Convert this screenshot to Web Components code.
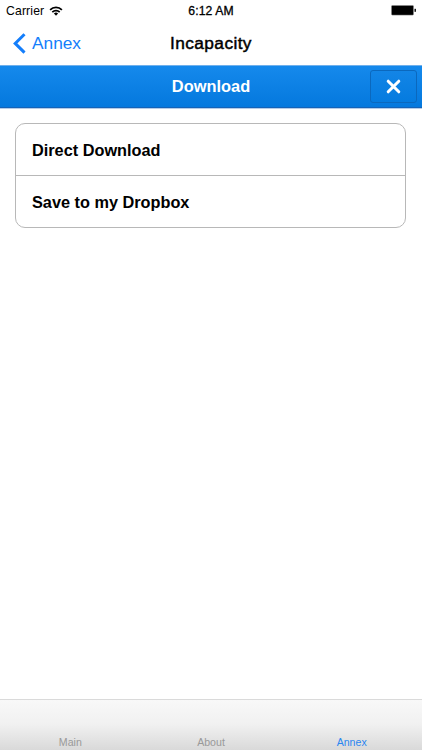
<!DOCTYPE html>
<html lang="en">
<head>
<meta charset="utf-8">
<meta name="viewport" content="width=device-width, initial-scale=1">
<title>Incapacity</title>
<style>
  html, body {
    margin: 0;
    height: 100%;
    overflow: hidden;
    background: #fff;
    font-family: "Liberation Sans", Arial, sans-serif;
  }
</style>
</head>
<body>
<phone-screen>
  <status-bar slot="top" carrier="Carrier" time="6:12 AM"></status-bar>
  <nav-bar slot="top" back="Annex">Incapacity</nav-bar>
  <dialog-header slot="top">Download</dialog-header>
  <option-list>
    <option-row>Direct Download</option-row>
    <option-row>Save to my Dropbox</option-row>
  </option-list>
  <tab-bar slot="bottom">
    <tab-item>Main</tab-item>
    <tab-item>About</tab-item>
    <tab-item active>Annex</tab-item>
  </tab-bar>
</phone-screen>

<script>
class PhoneScreen extends HTMLElement {
  constructor() {
    super();
    this.attachShadow({ mode: "open" });
  }
  connectedCallback() {
    this.shadowRoot.innerHTML = `
      <style>
        :host {
          display: flex;
          flex-direction: column;
          height: 100vh;
        }
        main {
          flex: 1;
          padding: 14px 16px 0 15px;
        }
      </style>
      <slot name="top"></slot>
      <main><slot></slot></main>
      <slot name="bottom"></slot>
    `;
  }
}
customElements.define("phone-screen", PhoneScreen);

class StatusBar extends HTMLElement {
  constructor() {
    super();
    this.attachShadow({ mode: "open" });
  }
  connectedCallback() {
    this.shadowRoot.innerHTML = `
      <style>
        :host {
          display: grid;
          grid-template-columns: 1fr auto 1fr;
          align-items: center;
          box-sizing: border-box;
          height: 22px;
          padding: 0 6px;
          font-size: 12.2px;
          line-height: 22px;
          color: #000;
        }
        .left {
          display: flex;
          align-items: center;
          letter-spacing: 0.15px;
        }
        .wifi {
          margin-left: 5px;
          margin-bottom: 1px;
        }
        .time {
          letter-spacing: 0.1px;
          -webkit-text-stroke: 0.3px #000;
        }
        .battery {
          justify-self: end;
          margin-bottom: 1px;
        }
        svg {
          display: block;
        }
      </style>
      <div class="left">
        <span>${this.getAttribute("carrier")}</span>
        <svg class="wifi" width="14" height="10" viewBox="0 0 14 10" fill="none" stroke="#000" stroke-width="1.7">
          <path d="M1.1 3.8a8.3 8.3 0 0 1 11.8 0"/>
          <path d="M3.3 6.1a5.2 5.2 0 0 1 7.4 0"/>
          <path d="M7 9.7L4.9 7.6a3 3 0 0 1 4.2 0z" fill="#000" stroke="none"/>
        </svg>
      </div>
      <span class="time">${this.getAttribute("time")}</span>
      <svg class="battery" width="25" height="11" viewBox="0 0 25 11">
        <rect x="0.5" y="0.5" width="22" height="9.5" rx="1" stroke="#888" stroke-width="0.8"/>
        <rect x="1" y="1" width="21" height="8.5"/>
        <rect x="23.5" y="3.8" width="1.4" height="3"/>
      </svg>
    `;
  }
}
customElements.define("status-bar", StatusBar);

class NavBar extends HTMLElement {
  constructor() {
    super();
    this.attachShadow({ mode: "open" });
  }
  connectedCallback() {
    this.shadowRoot.innerHTML = `
      <style>
        :host {
          display: grid;
          grid-template-columns: 1fr auto 1fr;
          align-items: center;
          box-sizing: border-box;
          height: 43px;
          padding: 0 13px;
          font-size: 17.3px;
          line-height: 43px;
        }
        .back {
          display: flex;
          align-items: center;
          color: #147efb;
          cursor: pointer;
        }
        .back svg {
          margin-right: 6px;
        }
        .title {
          color: #000;
          letter-spacing: 0.4px;
          -webkit-text-stroke: 0.45px #000;
        }
      </style>
      <div class="back">
        <svg width="13" height="21" viewBox="0 0 13 21" fill="none" stroke="#147efb" stroke-width="3">
          <path d="M11.5 1.2L2.2 10.4l9.3 9.2"/>
        </svg>
        <span>${this.getAttribute("back")}</span>
      </div>
      <span class="title"><slot></slot></span>
    `;
  }
}
customElements.define("nav-bar", NavBar);

class DialogHeader extends HTMLElement {
  constructor() {
    super();
    this.attachShadow({ mode: "open" });
  }
  connectedCallback() {
    this.shadowRoot.innerHTML = `
      <style>
        :host {
          display: grid;
          grid-template-columns: 1fr auto 1fr;
          align-items: center;
          box-sizing: border-box;
          height: 44px;
          padding: 0 5px 1px;
          border-top: 1px solid #6fb0ec;
          border-bottom: 1px solid #b5cce8;
          background: linear-gradient(#1589ec, #0478dd);
          box-shadow: inset 0 -1px 0 #1463b8;
          color: #fff;
          font-size: 16.4px;
          font-weight: bold;
        }
        .title {
          grid-column: 2;
          padding-bottom: 1px;
        }
        button {
          justify-self: end;
          display: flex;
          align-items: center;
          justify-content: center;
          box-sizing: border-box;
          width: 47px;
          height: 33px;
          padding: 0;
          border: 1px solid #0b68bd;
          border-radius: 3px;
          background: linear-gradient(#1385e6, #057bdf);
        }
      </style>
      <span class="title"><slot></slot></span>
      <button aria-label="Close">
        <svg width="15" height="15" viewBox="0 0 15 15" stroke="#fff" stroke-width="3" stroke-linecap="round">
          <path d="M2.2 2.2l10.6 10.6M12.8 2.2L2.2 12.8"/>
        </svg>
      </button>
    `;
  }
}
customElements.define("dialog-header", DialogHeader);

class OptionList extends HTMLElement {
  constructor() {
    super();
    this.attachShadow({ mode: "open" });
  }
  connectedCallback() {
    this.shadowRoot.innerHTML = `
      <style>
        :host {
          display: block;
          border: 1px solid #b8b8b8;
          border-radius: 10px;
          overflow: hidden;
          background: #fff;
        }
      </style>
      <slot></slot>
    `;
  }
}
customElements.define("option-list", OptionList);

class OptionRow extends HTMLElement {
  constructor() {
    super();
    this.attachShadow({ mode: "open" });
  }
  connectedCallback() {
    this.shadowRoot.innerHTML = `
      <style>
        :host {
          display: block;
          padding: 1px 16px 0;
          color: #000;
          font-size: 16.3px;
          font-weight: bold;
          line-height: 50px;
          cursor: pointer;
        }
        :host(:not(:first-child)) {
          border-top: 1px solid #b8b8b8;
        }
      </style>
      <slot></slot>
    `;
  }
}
customElements.define("option-row", OptionRow);

class TabBar extends HTMLElement {
  constructor() {
    super();
    this.attachShadow({ mode: "open" });
  }
  connectedCallback() {
    this.shadowRoot.innerHTML = `
      <style>
        :host {
          display: flex;
          align-items: flex-end;
          box-sizing: border-box;
          height: 51px;
          border-top: 1px solid #dadada;
          background: linear-gradient(#f8f8f8, #f1f1f1 48%, #d9d9d9);
        }
      </style>
      <slot></slot>
    `;
  }
}
customElements.define("tab-bar", TabBar);

class TabItem extends HTMLElement {
  constructor() {
    super();
    this.attachShadow({ mode: "open" });
  }
  connectedCallback() {
    this.shadowRoot.innerHTML = `
      <style>
        :host {
          flex: 1;
          padding-bottom: 2px;
          text-align: center;
          font-size: 10.6px;
          line-height: 12px;
          color: #999;
          cursor: pointer;
        }
        :host([active]) {
          color: #2a86f0;
        }
      </style>
      <slot></slot>
    `;
  }
}
customElements.define("tab-item", TabItem);
</script>
</body>
</html>
